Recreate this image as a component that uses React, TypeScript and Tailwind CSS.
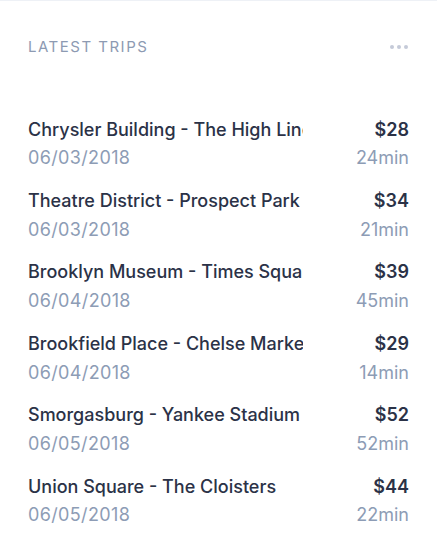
const trips = [
  { title: "Chrysler Building - The High Line", date: "06/03/2018", price: "$28", time: "24min" },
  { title: "Theatre District - Prospect Park", date: "06/03/2018", price: "$34", time: "21min" },
  { title: "Brooklyn Museum - Times Square", date: "06/04/2018", price: "$39", time: "45min" },
  { title: "Brookfield Place - Chelse Market", date: "06/04/2018", price: "$29", time: "14min" },
  { title: "Smorgasburg - Yankee Stadium", date: "06/05/2018", price: "$52", time: "52min" },
  { title: "Union Square - The Cloisters", date: "06/05/2018", price: "$44", time: "22min" },
];

export default function App() {
  return (
    <div className="w-[437px] h-[548px] bg-white border-t border-[#eef1f6] px-[28px] pt-[36px] font-['Inter','Noto_Sans',sans-serif]">
      <div className="flex items-center justify-between h-[20px]">
        <h2 className="text-[15px] leading-[20px] tracking-[0.1em] text-[#8d9ab2]">LATEST TRIPS</h2>
        <div className="flex gap-[3px] pr-px">
          <span className="w-[4px] h-[4px] rounded-full bg-[#c5cad8]" />
          <span className="w-[4px] h-[4px] rounded-full bg-[#c5cad8]" />
          <span className="w-[4px] h-[4px] rounded-full bg-[#c5cad8]" />
        </div>
      </div>
      <ul className="mt-[58.6px] flex flex-col gap-[13.8px]">
        {trips.map((t, idx) => (
          <li key={idx} className="flex justify-between">
            <div className="flex flex-col">
              <span className="w-[275px] overflow-hidden whitespace-nowrap text-[18px] leading-[28.8px] font-medium text-[#2b3247]">
                {t.title}
              </span>
              <span className="text-[18px] leading-[28.8px] tracking-[0.02em] text-[#8d9cb5]">{t.date}</span>
            </div>
            <div className="flex flex-col items-end">
              <span className="text-[18px] leading-[28.8px] font-semibold text-[#2b3247]">{t.price}</span>
              <span className="text-[18px] leading-[28.8px] text-[#8d9cb5]">{t.time}</span>
            </div>
          </li>
        ))}
      </ul>
    </div>
  );
}
